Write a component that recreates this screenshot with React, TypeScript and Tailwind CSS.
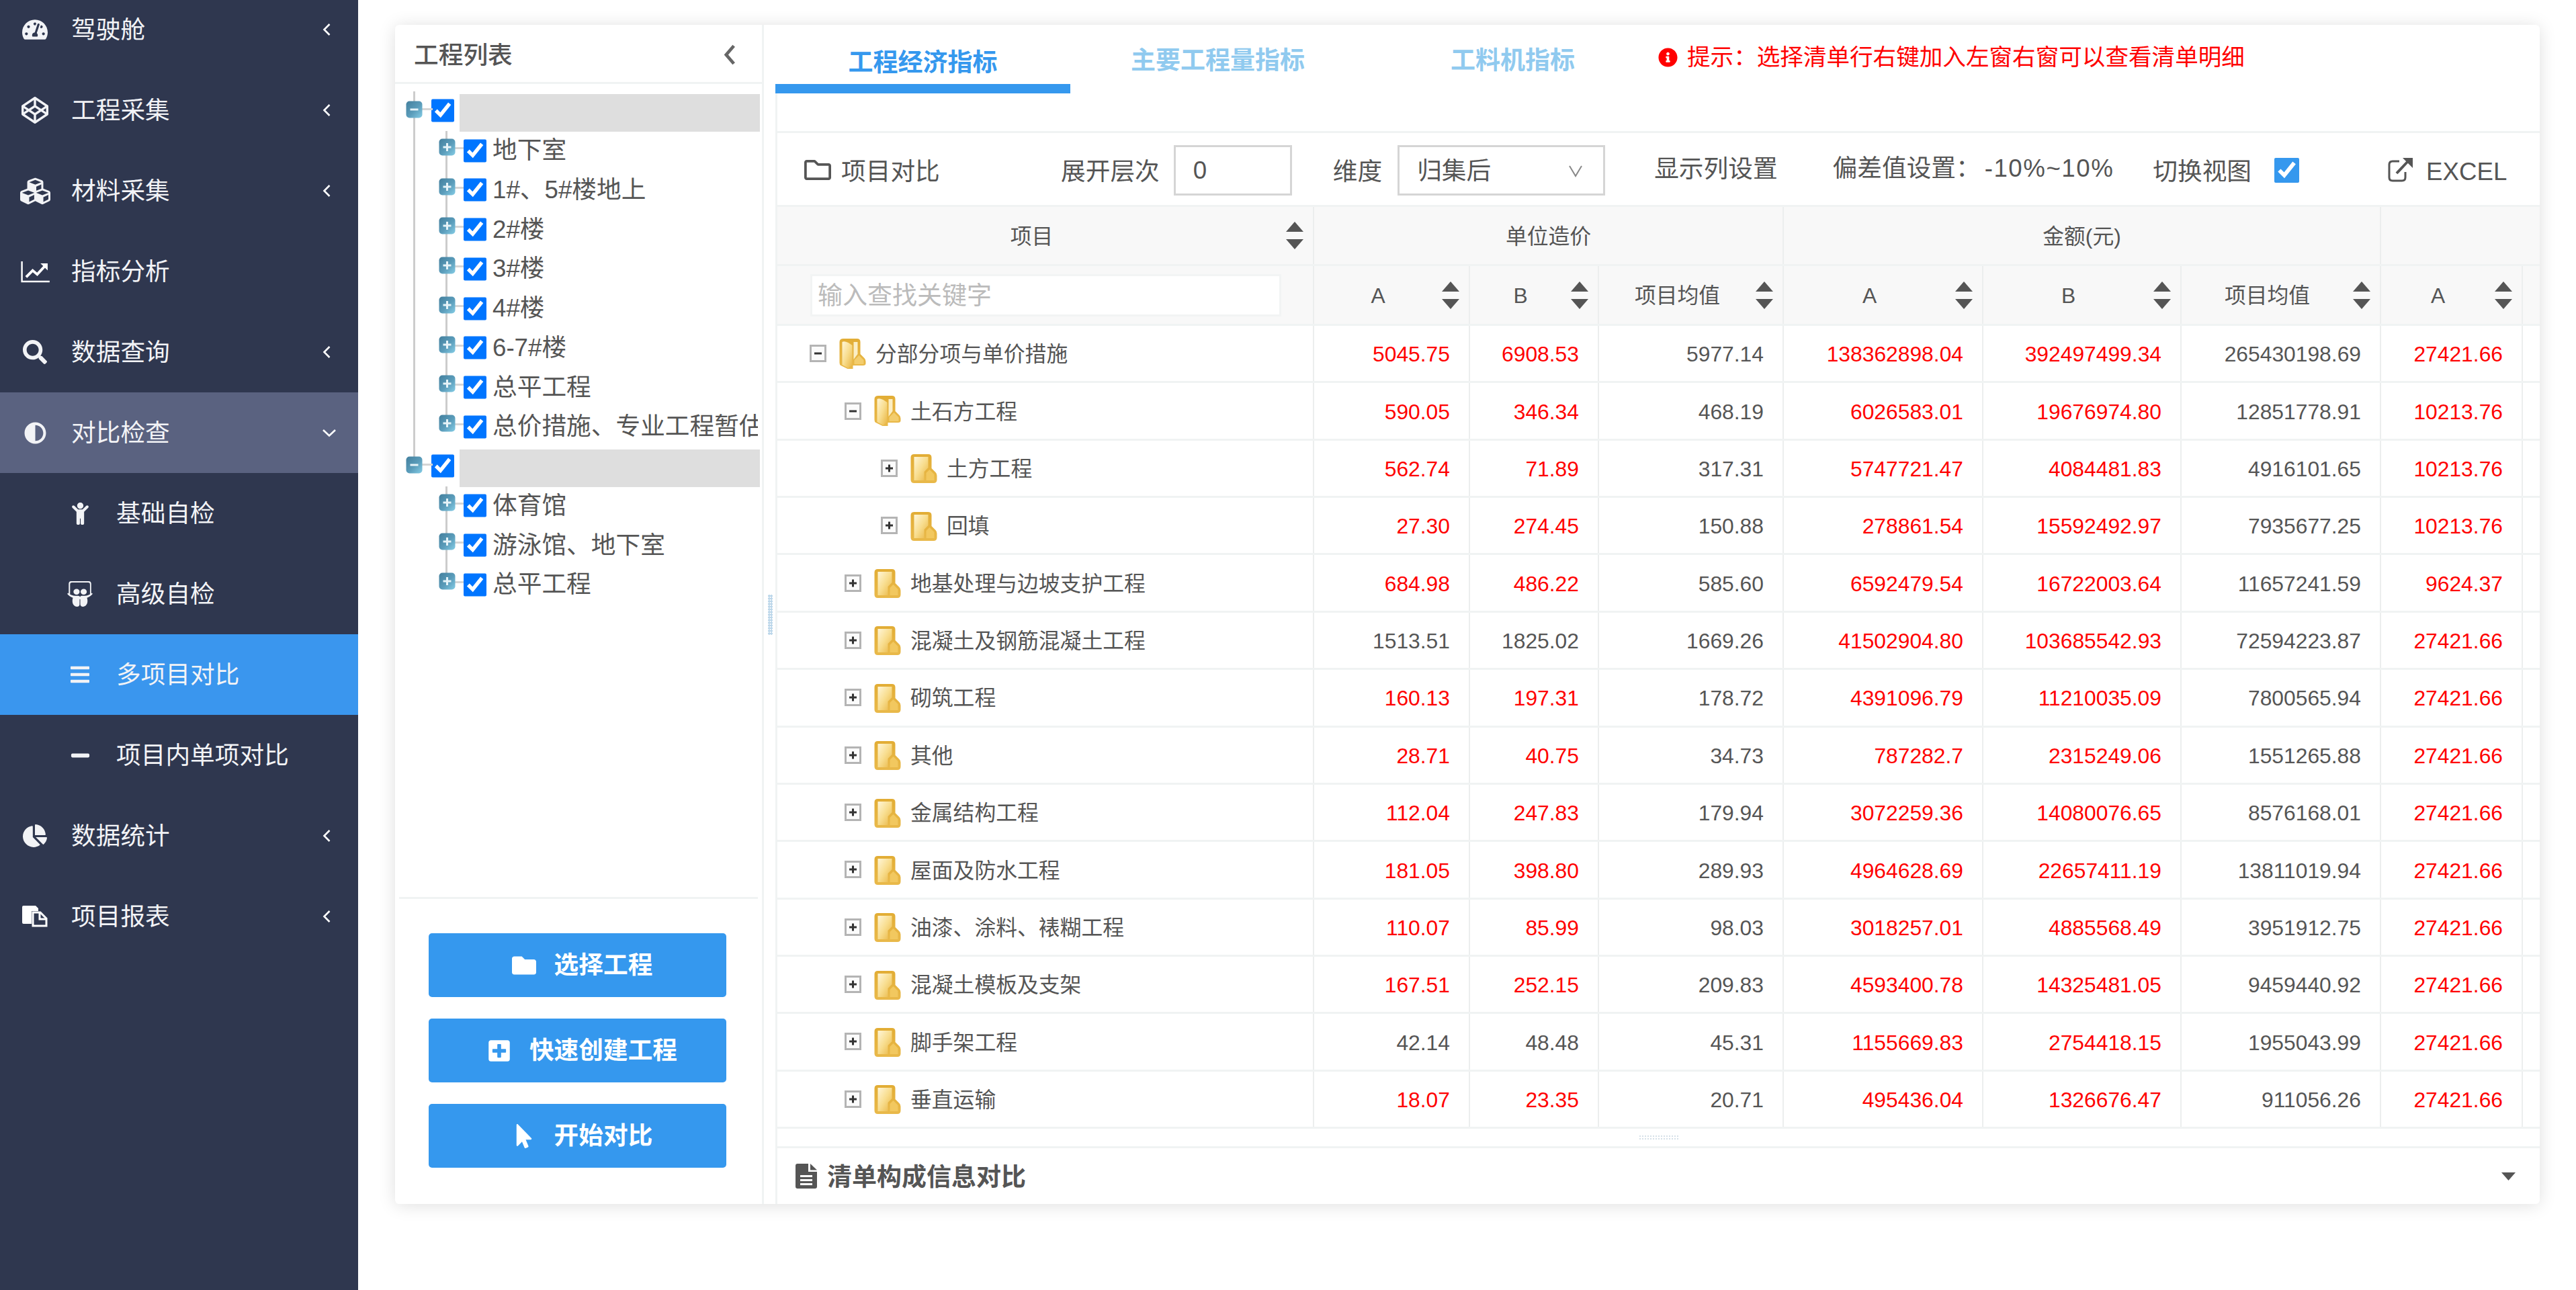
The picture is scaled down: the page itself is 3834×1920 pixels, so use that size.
import React from "react";
import {
  FaTachometerAlt,
  FaCodepen,
  FaCubes,
  FaSearch,
  FaAdjust,
  FaChild,
  FaSlideshare,
  FaBars,
  FaMinus,
  FaChartPie,
  FaFolder,
  FaPlusSquare,
  FaMousePointer,
  FaInfoCircle,
  FaRegFolder,
} from "react-icons/fa";

const tableGrid = "grid grid-cols-[799px_232px_192px_275px_297px_295px_297px_211px_1fr]";

function LineChartIcon() {
  return (
    <svg viewBox="0 0 44 34" className="w-[43px] h-[33px]" fill="none">
      <path d="M1.5 1V32H44" stroke="white" strokeWidth="2.5" />
      <path d="M8 25L18 15L25 21L37 8" stroke="white" strokeWidth="4" />
      <path d="M30 4H41V15Z" fill="white" />
    </svg>
  );
}

function FilesIcon() {
  return (
    <svg viewBox="0 0 38 32" className="w-[38px] h-[32px]">
      <path d="M2 0H20L24 4V8H14V27H2Q0 27 0 25V2Q0 0 2 0Z" fill="white" />
      <path d="M16 10H27L36 19V30H16Z" fill="none" stroke="white" strokeWidth="3" />
      <path d="M26 10V20H36" fill="none" stroke="white" strokeWidth="3" />
    </svg>
  );
}

function DocIcon() {
  return (
    <svg viewBox="0 0 32 37" className="w-[32px] h-[37px] shrink-0" fill="#555555">
      <path d="M3 0H19V12H32V34Q32 37 29 37H3Q0 37 0 34V3Q0 0 3 0Z" />
      <path d="M22 0L32 9.5H22Z" />
      <rect x="7" y="17" width="18" height="3" fill="white" />
      <rect x="7" y="23" width="18" height="3" fill="white" />
      <rect x="7" y="29" width="18" height="3" fill="white" />
    </svg>
  );
}

function ChevronLeftSmall() {
  return (
    <svg viewBox="0 0 12 20" className="w-[12px] h-[20px]" fill="none">
      <path d="M10.5 2L2.5 10L10.5 18" stroke="white" strokeWidth="2.6" />
    </svg>
  );
}

function ChevronDownSmall() {
  return (
    <svg viewBox="0 0 22 13" className="w-[22px] h-[13px]" fill="none">
      <path d="M2 2L11 10.5L20 2" stroke="white" strokeWidth="2.6" />
    </svg>
  );
}

function SortCaret() {
  return (
    <svg viewBox="0 0 26 41" className="w-[26px] h-[41px] shrink-0" fill="#555555">
      <path d="M13 0L26 15H0Z" />
      <path d="M0 26H26L13 41Z" />
    </svg>
  );
}

function TreeToggle({ open }: { open?: boolean }) {
  return (
    <svg viewBox="0 0 25 26" className="relative w-[25px] h-[26px] shrink-0">
      <defs>
        <linearGradient id="treeToggleFill" x1="0" y1="0" x2="1" y2="1">
          <stop offset="0" stopColor="#437f9d" />
          <stop offset="0.55" stopColor="#5b9dbb" />
          <stop offset="1" stopColor="#85cde6" />
        </linearGradient>
      </defs>
      <rect x="0.5" y="0.5" width="24" height="25" rx="5" fill="url(#treeToggleFill)" />
      <rect x="6.5" y="11.5" width="12" height="3" fill="#e6f3f8" />
      {!open && <rect x="11" y="7" width="3" height="12" fill="#e6f3f8" />}
    </svg>
  );
}

function TableToggle({ open }: { open?: boolean }) {
  return (
    <svg viewBox="0 0 25 26" className="w-[25px] h-[26px] shrink-0">
      <rect x="1.5" y="1.5" width="22" height="23" fill="#fbfbfb" stroke="#b4b4b4" strokeWidth="3" />
      <rect x="7" y="11.5" width="11" height="3" fill="#333333" />
      {!open && <rect x="11" y="7.5" width="3" height="11" fill="#333333" />}
    </svg>
  );
}

function FolderIcon({ open }: { open?: boolean }) {
  return (
    <svg viewBox="0 0 40 47" className="w-[41px] h-[47px] shrink-0">
      <defs>
        <linearGradient id="folderBack" x1="0" y1="0" x2="0" y2="1">
          <stop offset="0" stopColor="#e2ad35" />
          <stop offset="1" stopColor="#e9b94a" />
        </linearGradient>
        <linearGradient id="folderFront" x1="0" y1="0" x2="1" y2="1">
          <stop offset="0" stopColor="#fff6d8" />
          <stop offset="0.5" stopColor="#f8dd8e" />
          <stop offset="1" stopColor="#e8b441" />
        </linearGradient>
      </defs>
      {open ? (
        <g>
          <path d="M7 1H27Q32 1 32 6V24L38 30Q40 32 40 35V38Q40 41 36 41H21V46H13L3 41Q1 40 1 37V6Q1 1 7 1Z" fill="url(#folderBack)" />
          <path d="M5 6Q8 4 14 7L20 11V40L14 45L5 40Z" fill="url(#folderFront)" />
          <path d="M22 6H28V24L22 32Z" fill="#fbeec4" />
          <path d="M23 33L30 26L37 33V39H23Z" fill="#f3cd6d" />
        </g>
      ) : (
        <g>
          <path d="M6 3H27Q32 3 32 8V24L38 30Q40 32 40 35V41Q40 46 35 46H6Q1 46 1 41V8Q1 3 6 3Z" fill="url(#folderBack)" />
          <path d="M6 7H27V23L21 29V42H6Z" fill="url(#folderFront)" />
          <path d="M24 42V31L29 26L36 33V42Z" fill="#f2c85f" />
        </g>
      )}
    </svg>
  );
}

interface SideItem {
  label: string;
  icon: React.ReactNode;
  arrow?: "left" | "down";
  sub?: boolean;
  tone?: "group" | "active";
}

const sideItems: SideItem[] = [
  { label: "驾驶舱", icon: <FaTachometerAlt size={38} />, arrow: "left" },
  { label: "工程采集", icon: <FaCodepen size={40} />, arrow: "left" },
  { label: "材料采集", icon: <FaCubes size={45} />, arrow: "left" },
  { label: "指标分析", icon: <LineChartIcon /> },
  { label: "数据查询", icon: <FaSearch size={36} />, arrow: "left" },
  { label: "对比检查", icon: <FaAdjust size={33} />, arrow: "down", tone: "group" },
  { label: "基础自检", icon: <FaChild size={33} />, sub: true },
  { label: "高级自检", icon: <FaSlideshare size={38} />, sub: true },
  { label: "多项目对比", icon: <FaBars size={32} />, sub: true, tone: "active" },
  { label: "项目内单项对比", icon: <FaMinus size={31} />, sub: true },
  { label: "数据统计", icon: <FaChartPie size={36} />, arrow: "left" },
  { label: "项目报表", icon: <FilesIcon />, arrow: "left" },
];

function Sidebar() {
  return (
    <aside className="w-[533px] h-full shrink-0 bg-[#2f374f] text-white overflow-hidden">
      <div className="mt-[-16px]">
        {sideItems.map((item) => (
          <div
            key={item.label}
            className={`h-[120px] flex items-center text-[36.7px] text-[#f2f3f6] ${
              item.tone === "group" ? "bg-[#5a6280]" : item.tone === "active" ? "bg-[#3a96ee]" : ""
            }`}
          >
            <span className={`w-[46px] flex justify-center ${item.sub ? "ml-[96px]" : "ml-[29px]"}`}>{item.icon}</span>
            <span className="ml-[31px] flex-1 pt-[1px]">{item.label}</span>
            {item.arrow === "left" && (
              <span className="mr-[41px] flex"><ChevronLeftSmall /></span>
            )}
            {item.arrow === "down" && (
              <span className="mr-[32px] flex"><ChevronDownSmall /></span>
            )}
          </div>
        ))}
      </div>
    </aside>
  );
}

interface TreeRow {
  label?: string;
  root?: boolean;
  outer?: boolean;
  last?: boolean;
}

const treeRows: TreeRow[] = [
  { root: true },
  { label: "地下室", outer: true },
  { label: "1#、5#楼地上", outer: true },
  { label: "2#楼", outer: true },
  { label: "3#楼", outer: true },
  { label: "4#楼", outer: true },
  { label: "6-7#楼", outer: true },
  { label: "总平工程", outer: true },
  { label: "总价措施、专业工程暂估价", outer: true, last: true },
  { root: true, last: true },
  { label: "体育馆" },
  { label: "游泳馆、地下室" },
  { label: "总平工程", last: true },
];

function ProjectTree() {
  return (
    <div className="flex-1 pt-[11px] overflow-hidden">
      {treeRows.map((row, i) =>
        row.root ? (
          <div key={i} className="relative h-[58.75px] flex items-center pl-[16px]">
            <span className={`absolute left-[27px] w-[3px] bg-[#cccccc] ${row.last ? "top-0 h-[20px]" : "top-0 h-full"}`} />
            <span className="absolute left-[40px] top-[25px] w-[16px] h-[3px] bg-[#d5d5d5]" />
            <span className="self-start mt-[14px]"><TreeToggle open /></span>
            <input type="checkbox" checked readOnly className="ml-[13px] w-[34px] h-[35px] m-0 mt-[-2px]" />
            <span className="ml-[8px] h-[56px] flex-1 bg-[#dedede] mr-[3px] mt-[5px]" />
          </div>
        ) : (
          <div key={i} className="relative h-[58.75px] flex items-center pl-[65px] text-[36.7px] text-[#555555]">
            {row.outer && <span className="absolute left-[27px] top-0 h-full w-[3px] bg-[#cccccc]" />}
            <span className={`absolute left-[75px] top-0 w-[3px] bg-[#cccccc] ${row.last ? "h-[30px]" : "h-full"}`} />
            <span className="absolute left-[88px] top-[24px] w-[14px] h-[3px] bg-[#d5d5d5]" />
            <span className="self-start mt-[11px]"><TreeToggle /></span>
            <input type="checkbox" checked readOnly className="ml-[12px] w-[34px] h-[35px] m-0 shrink-0" />
            <span className="ml-[9px] mr-[6px] flex-1 overflow-hidden whitespace-nowrap leading-[58px]">{row.label}</span>
          </div>
        )
      )}
    </div>
  );
}

function ActionButton({ icon, label }: { icon: React.ReactNode; label: string }) {
  return (
    <button className="w-[443px] h-[95px] rounded-[5px] bg-[#3598ee] text-white text-[36.7px] font-bold flex items-center justify-center gap-[27px] pl-[14px]">
      {icon}
      <span>{label}</span>
    </button>
  );
}

function LeftPanel() {
  return (
    <section className="w-[549px] shrink-0 border-r-[3px] border-[#f0f3f3] flex flex-col">
      <div className="h-[88px] shrink-0 border-b-[3px] border-[#f0f3f3] flex items-center justify-between pl-[28px] pr-[38px] pt-[6px] text-[36.7px] font-medium text-[#555555]">
        <span>工程列表</span>
        <svg viewBox="0 0 20 34" className="w-[19px] h-[33px] mt-[-2px]" fill="none">
          <path d="M16 3L4 17L16 31" stroke="#666666" strokeWidth="5" />
        </svg>
      </div>
      <ProjectTree />
      <div className="mx-[6px] h-[3px] bg-[#f0f3f3]" />
      <div className="pl-[50px] pt-[51px] pb-[54px] flex flex-col gap-[32px]">
        <ActionButton icon={<FaFolder size={36} />} label="选择工程" />
        <ActionButton icon={<FaPlusSquare size={36} />} label="快速创建工程" />
        <ActionButton icon={<FaMousePointer size={36} />} label="开始对比" />
      </div>
    </section>
  );
}

function Splitter() {
  return (
    <div className="w-[17px] shrink-0 flex items-center">
      <div className="ml-[6px] w-[7px] h-[60px] bg-[radial-gradient(#bcd7ea_1.5px,transparent_1.5px)] bg-[length:3.5px_4px]" />
    </div>
  );
}

function Toolbar() {
  return (
    <div className="h-[110px] pt-[4px] flex items-center text-[36.7px] text-[#555555] border-b-[3px] border-[#f0f3f3]">
      <span className="ml-[40px] flex items-center gap-[15px] w-[382px]">
        <FaRegFolder size={40} />
        <span className="pt-[4px]">项目对比</span>
      </span>
      <span className="pt-[4px]">展开层次</span>
      <span className="ml-[21px] w-[176px] h-[75px] border-[3px] border-[#d5d5d5] flex items-center pl-[26px]">0</span>
      <span className="ml-[61px] pt-[4px]">维度</span>
      <span className="ml-[23px] w-[309px] h-[75px] border-[3px] border-[#d5d5d5] flex items-center justify-between pl-[26px] pr-[30px]">
        <span className="pt-[2px]">归集后</span>
        <svg viewBox="0 0 22 20" className="w-[22px] h-[20px]" fill="none">
          <path d="M2 3L11 18L20 3" stroke="#888888" strokeWidth="2" />
        </svg>
      </span>
      <span className="ml-[73px] mt-[-3px]">显示列设置</span>
      <span className="ml-[82px] mt-[-6px]">
        偏差值设置：<span className="ml-[6px] tracking-[1.5px]">-10%~10%</span>
      </span>
      <span className="ml-[58px] pt-[4px]">切换视图</span>
      <input type="checkbox" checked readOnly className="ml-[34px] w-[37px] h-[37px] m-0 accent-[#3598ee]" />
      <span className="ml-[131px] flex items-center gap-[20px]">
        <svg viewBox="0 0 38 38" className="w-[38px] h-[38px]" fill="none">
          <path d="M18 6H8Q3 6 3 11V30Q3 35 8 35H22Q27 35 27 30V22" stroke="#555555" strokeWidth="3" />
          <path d="M14 24L30 7" stroke="#555555" strokeWidth="4" />
          <path d="M23 1H38V16Z" fill="#555555" />
        </svg>
        <span className="pt-[4px]">EXCEL</span>
      </span>
    </div>
  );
}

function SortHeader({ label }: { label: string }) {
  return (
    <div className="flex items-center text-[31.8px] pr-[14px] border-r-2 border-[#eceeee]">
      <span className="flex-1 text-center pt-[4px]">{label}</span>
      <SortCaret />
    </div>
  );
}

function TableHead() {
  return (
    <div className="bg-[#f8f8f8] text-[#555555]">
      <div className={`${tableGrid} h-[88px] border-b-[3px] border-[#f0f3f3]`}>
        <SortHeader label="项目" />
        <div className="col-span-3 flex items-center justify-center pt-[4px] text-[31.8px] border-r-2 border-[#eceeee]">单位造价</div>
        <div className="col-span-3 flex items-center justify-center pt-[4px] text-[31.8px] border-r-2 border-[#eceeee]">金额(元)</div>
        <div className="col-span-2" />
      </div>
      <div className={`${tableGrid} h-[89px] border-b-[3px] border-[#f0f3f3]`}>
        <div className="flex items-center pl-[49px] border-r-2 border-[#eceeee]">
          <div className="w-[701px] h-[63px] bg-white border-[3px] border-[#f2f4f4] pl-[8px] pt-[3px] flex items-center text-[37px] text-[#bbbbbb]">
            输入查找关键字
          </div>
        </div>
        <SortHeader label="A" />
        <SortHeader label="B" />
        <SortHeader label="项目均值" />
        <SortHeader label="A" />
        <SortHeader label="B" />
        <SortHeader label="项目均值" />
        <SortHeader label="A" />
        <div />
      </div>
    </div>
  );
}

interface DataRow {
  name: string;
  level: number;
  open?: boolean;
  calm?: boolean;
  values: string[];
}

const dataRows: DataRow[] = [
  { name: "分部分项与单价措施", level: 0, open: true, values: ["5045.75", "6908.53", "5977.14", "138362898.04", "392497499.34", "265430198.69", "27421.66"] },
  { name: "土石方工程", level: 1, open: true, values: ["590.05", "346.34", "468.19", "6026583.01", "19676974.80", "12851778.91", "10213.76"] },
  { name: "土方工程", level: 2, values: ["562.74", "71.89", "317.31", "5747721.47", "4084481.83", "4916101.65", "10213.76"] },
  { name: "回填", level: 2, values: ["27.30", "274.45", "150.88", "278861.54", "15592492.97", "7935677.25", "10213.76"] },
  { name: "地基处理与边坡支护工程", level: 1, values: ["684.98", "486.22", "585.60", "6592479.54", "16722003.64", "11657241.59", "9624.37"] },
  { name: "混凝土及钢筋混凝土工程", level: 1, calm: true, values: ["1513.51", "1825.02", "1669.26", "41502904.80", "103685542.93", "72594223.87", "27421.66"] },
  { name: "砌筑工程", level: 1, values: ["160.13", "197.31", "178.72", "4391096.79", "11210035.09", "7800565.94", "27421.66"] },
  { name: "其他", level: 1, values: ["28.71", "40.75", "34.73", "787282.7", "2315249.06", "1551265.88", "27421.66"] },
  { name: "金属结构工程", level: 1, values: ["112.04", "247.83", "179.94", "3072259.36", "14080076.65", "8576168.01", "27421.66"] },
  { name: "屋面及防水工程", level: 1, values: ["181.05", "398.80", "289.93", "4964628.69", "22657411.19", "13811019.94", "27421.66"] },
  { name: "油漆、涂料、裱糊工程", level: 1, values: ["110.07", "85.99", "98.03", "3018257.01", "4885568.49", "3951912.75", "27421.66"] },
  { name: "混凝土模板及支架", level: 1, values: ["167.51", "252.15", "209.83", "4593400.78", "14325481.05", "9459440.92", "27421.66"] },
  { name: "脚手架工程", level: 1, calm: true, values: ["42.14", "48.48", "45.31", "1155669.83", "2754418.15", "1955043.99", "27421.66"] },
  { name: "垂直运输", level: 1, values: ["18.07", "23.35", "20.71", "495436.04", "1326676.47", "911056.26", "27421.66"] },
];

const levelPadding = ["pl-[48px]", "pl-[100px]", "pl-[154px]"];

function TableBody() {
  return (
    <div>
      {dataRows.map((row) => (
        <div key={row.name} className={`${tableGrid} h-[85.36px] border-b-[3px] border-[#f0f3f3] text-[31.8px] text-[#555555]`}>
          <div className={`flex items-center border-r-2 border-[#eceeee] ${levelPadding[row.level]}`}>
            <TableToggle open={row.open} />
            <span className="ml-[18px]"><FolderIcon open={row.open} /></span>
            <span className="ml-[14px] pt-[4px]">{row.name}</span>
          </div>
          {row.values.map((value, i) => {
            const warn = i === 6 || (!row.calm && (i === 0 || i === 1 || i === 3 || i === 4)) || (row.calm && (i === 3 || i === 4));
            return (
              <div
                key={i}
                className={`flex items-center justify-end pr-[28px] pt-[4px] border-r-2 border-[#eceeee] ${warn ? "text-[#ff0000]" : ""}`}
              >
                {value}
              </div>
            );
          })}
          <div />
        </div>
      ))}
    </div>
  );
}

function RightPanel() {
  return (
    <section className="flex-1 min-w-0 flex flex-col overflow-hidden">
      <div className="h-[102px] shrink-0 flex items-start text-[37px] font-bold">
        <div className="w-[439px] h-[102px] border-b-[14px] border-[#3598ee] text-[#3598ee] text-center pt-[35px] leading-[44px]">工程经济指标</div>
        <div className="w-[439px] text-[#90caef] text-center pt-[32px] leading-[44px]">主要工程量指标</div>
        <div className="w-[439px] text-[#90caef] text-center pt-[32px] leading-[44px]">工料机指标</div>
        <div className="ml-[-3px] pt-[26px] flex items-center gap-[14px] text-[34.6px] font-normal text-[#ff0000] leading-[44px]">
          <FaInfoCircle size={29} />
          提示：选择清单行右键加入左窗右窗可以查看清单明细
        </div>
      </div>
      <div className="flex-1 min-h-0 flex flex-col border-l-[3px] border-[#f0f3f3]">
        <div className="h-[59px] shrink-0 border-b-[3px] border-[#f0f3f3]" />
        <Toolbar />
        <TableHead />
        <TableBody />
        <div className="h-[29px] shrink-0 border-b-[3px] border-[#f0f3f3] flex items-center justify-center">
          <div className="w-[60px] h-[8px] bg-[radial-gradient(#d5e0e8_1.5px,transparent_1.5px)] bg-[length:4px_4px]" />
        </div>
        <div className="flex-1 flex items-center justify-between pl-[27px] pr-[36px] text-[37px] font-bold text-[#555555]">
          <span className="flex items-center gap-[15px]">
            <DocIcon />
            <span className="pt-[4px]">清单构成信息对比</span>
          </span>
          <svg viewBox="0 0 21 12" className="w-[21px] h-[12px]" fill="#555555">
            <path d="M0 0H21L10.5 12Z" />
          </svg>
        </div>
      </div>
    </section>
  );
}

export default function App() {
  return (
    <div className="w-[3834px] h-[1920px] flex bg-white overflow-hidden font-['Liberation_Sans','Noto_Sans_CJK_SC',sans-serif]">
      <Sidebar />
      <main className="flex-1 min-w-0 pl-[55px] pr-[54px] pt-[37px]">
        <div className="h-[1755px] flex bg-white rounded-[6px] shadow-[0_2px_26px_rgba(0,0,0,0.13)] overflow-hidden">
          <LeftPanel />
          <Splitter />
          <RightPanel />
        </div>
      </main>
    </div>
  );
}
